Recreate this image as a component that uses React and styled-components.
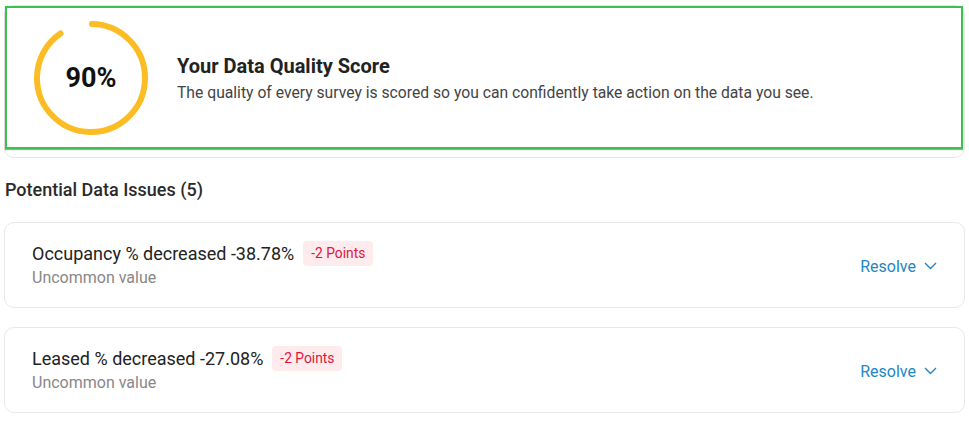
import styled, { createGlobalStyle } from 'styled-components';

const GlobalStyle = createGlobalStyle`
  body {
    margin: 0;
    background: #ffffff;
    font-family: Roboto, "Liberation Sans", Arial, sans-serif;
    color: #222;
  }
`;

const Page = styled.div`
  width: 969px;
  box-sizing: border-box;
  padding: 5px 4px 0 4px;
`;

const ScoreCard = styled.div`
  border: 1px solid #e6e6e6;
  border-radius: 10px;
  padding-bottom: 8px;
`;

const Hero = styled.div`
  display: flex;
  align-items: center;
  height: 143px;
  box-sizing: border-box;
  margin-right: 1px;
  border: 2px solid #3cc150;
  box-shadow: 0 1px 1px rgba(0, 0, 0, 0.35);
  padding-left: 27px;
  gap: 29px;
`;

const Donut = styled.div`
  position: relative;
  width: 114px;
  height: 114px;
  flex-shrink: 0;
`;

const DonutLabel = styled.div`
  position: absolute;
  inset: 0;
  display: flex;
  align-items: center;
  justify-content: center;
  font-size: 27px;
  font-weight: 700;
  color: #111;
`;

const HeroText = styled.div`
  display: flex;
  flex-direction: column;
  gap: 5px;
`;

const HeroTitle = styled.div`
  font-size: 20px;
  font-weight: 700;
  color: #222;
`;

const HeroSub = styled.div`
  font-size: 15.7px;
  color: #444;
`;

const SectionTitle = styled.div`
  font-size: 18px;
  font-weight: 500;
  color: #2a2a2a;
  margin: 21px 1px 22px;
`;

const IssueList = styled.div`
  display: flex;
  flex-direction: column;
  gap: 19px;
`;

const IssueCard = styled.div`
  display: flex;
  align-items: center;
  justify-content: space-between;
  height: 86px;
  box-sizing: border-box;
  border: 1px solid #e8e8e8;
  border-radius: 10px;
  padding: 0 27px 2px 27px;
`;

const IssueBody = styled.div`
  display: flex;
  flex-direction: column;
  gap: 2px;
`;

const IssueTitleRow = styled.div`
  display: flex;
  align-items: center;
  gap: 9px;
`;

const IssueTitle = styled.div`
  font-size: 18px;
  color: #222;
`;

const Badge = styled.span`
  background: #fdebee;
  color: #e0143c;
  font-size: 13.8px;
  border-radius: 4px;
  padding: 5px 8px;
  line-height: 15px;
`;

const IssueSub = styled.div`
  font-size: 16px;
  color: #888;
`;

const ResolveButton = styled.button`
  display: flex;
  align-items: center;
  gap: 8px;
  background: none;
  border: none;
  padding: 0;
  margin-top: 4px;
  font-family: inherit;
  font-size: 16px;
  color: #2386c4;
  cursor: pointer;
`;

const issues = [
  { title: 'Occupancy % decreased -38.78%', points: -2, reason: 'Uncommon value' },
  { title: 'Leased % decreased -27.08%', points: -2, reason: 'Uncommon value' },
];

function ScoreRing({ value }) {
  const r = 54;
  const c = 2 * Math.PI * r;
  return (
    <Donut>
      <svg width="114" height="114" viewBox="0 0 114 114">
        <circle
          cx="57"
          cy="57"
          r={r}
          fill="none"
          stroke="#fcbd24"
          strokeWidth="6"
          strokeLinecap="round"
          strokeDasharray={`${(c * value) / 100} ${c}`}
          transform="rotate(-89 57 57)"
        />
      </svg>
      <DonutLabel>{value}%</DonutLabel>
    </Donut>
  );
}

export default function App() {
  return (
    <Page>
      <GlobalStyle />
      <ScoreCard>
        <Hero>
          <ScoreRing value={90} />
          <HeroText>
            <HeroTitle>Your Data Quality Score</HeroTitle>
            <HeroSub>
              The quality of every survey is scored so you can confidently take action on the data you see.
            </HeroSub>
          </HeroText>
        </Hero>
      </ScoreCard>

      <SectionTitle>Potential Data Issues (5)</SectionTitle>

      <IssueList>
        {issues.map((issue) => (
          <IssueCard key={issue.title}>
            <IssueBody>
              <IssueTitleRow>
                <IssueTitle>{issue.title}</IssueTitle>
                <Badge>{issue.points} Points</Badge>
              </IssueTitleRow>
              <IssueSub>{issue.reason}</IssueSub>
            </IssueBody>
            <ResolveButton>
              Resolve
              <svg width="13" height="8" viewBox="0 0 13 8" fill="none">
                <path d="M1 1l5.5 5.5L12 1" stroke="#2386c4" strokeWidth="1.4" />
              </svg>
            </ResolveButton>
          </IssueCard>
        ))}
      </IssueList>
    </Page>
  );
}
